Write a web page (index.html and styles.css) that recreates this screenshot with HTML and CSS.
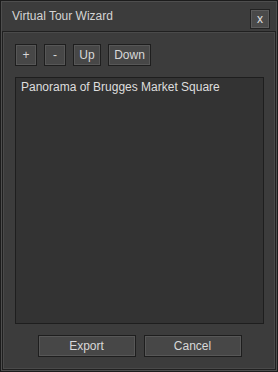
FILE: index.html
```html
<!DOCTYPE html>
<html lang="en">
    <head>
        <meta charset="UTF-8">
        <title>Virtual Tour Wizard</title>
        <link rel="stylesheet" href="styles.css">
    </head>
    <body>
        <div class="wizard">
            <div class="title-bar">
                <span class="title">Virtual Tour Wizard</span>
                <button class="close-btn">x</button>
            </div>
            <div class="wizard-body">
                <div class="toolbar">
                    <button class="btn btn-small">+</button>
                    <button class="btn btn-small">-</button>
                    <button class="btn btn-up">Up</button>
                    <button class="btn btn-down">Down</button>
                </div>
                <div class="pano-list">
                    <div class="pano-item">Panorama of Brugges Market Square</div>
                </div>
                <div class="actions">
                    <button class="btn btn-wide">Export</button>
                    <button class="btn btn-wide">Cancel</button>
                </div>
            </div>
        </div>
    </body>
</html>
```

FILE: styles.css
```css
* {
    margin: 0;
    padding: 0;
    box-sizing: border-box;
    font-family: "Liberation Sans", Arial, sans-serif;
}

body {
    background: #1e1e1e;
}

.wizard {
    width: 278px;
    height: 372px;
    background: #3c3c3c;
    border: 1px solid #1c1c1c;
    box-shadow: inset 0 0 0 1px #4e4e4e;
    display: flex;
    flex-direction: column;
}

.title-bar {
    height: 30px;
    display: flex;
    align-items: center;
    justify-content: space-between;
    padding: 0 7px 0 11px;
}

.title {
    color: #d4d4d4;
    font-size: 12px;
}

.close-btn {
    width: 20px;
    height: 20px;
    background: #4a4a4a;
    border: 1px solid #222;
    box-shadow: inset 0 0 0 1px #5c5c5c;
    color: #e0e0e0;
    font-size: 12px;
    line-height: 16px;
    margin-top: 6px;
}

.wizard-body {
    flex: 1;
    margin: 0 1px 1px;
    border: 1px solid #202020;
    box-shadow: inset 0 0 0 1px #4a4a4a;
    display: flex;
    flex-direction: column;
    padding: 12px 11px 12px 12px;
}

.toolbar {
    display: flex;
    gap: 7px;
    margin-bottom: 11px;
}

.btn {
    height: 22px;
    background: #474747;
    border: 1px solid #1e1e1e;
    box-shadow: inset 0 0 0 1px #575757;
    color: #d8d8d8;
    font-size: 12px;
    padding: 0;
}

.btn-small {
    width: 22px;
}

.btn-up {
    width: 28px;
}

.btn-down {
    width: 43px;
}

.pano-list {
    flex: 1;
    background: #333;
    border: 1px solid #1e1e1e;
    padding: 2px 5px;
}

.pano-item {
    color: #dedede;
    font-size: 12px;
}

.actions {
    display: flex;
    justify-content: center;
    gap: 8px;
    margin-top: 11px;
}

.btn-wide {
    width: 98px;
}
```
